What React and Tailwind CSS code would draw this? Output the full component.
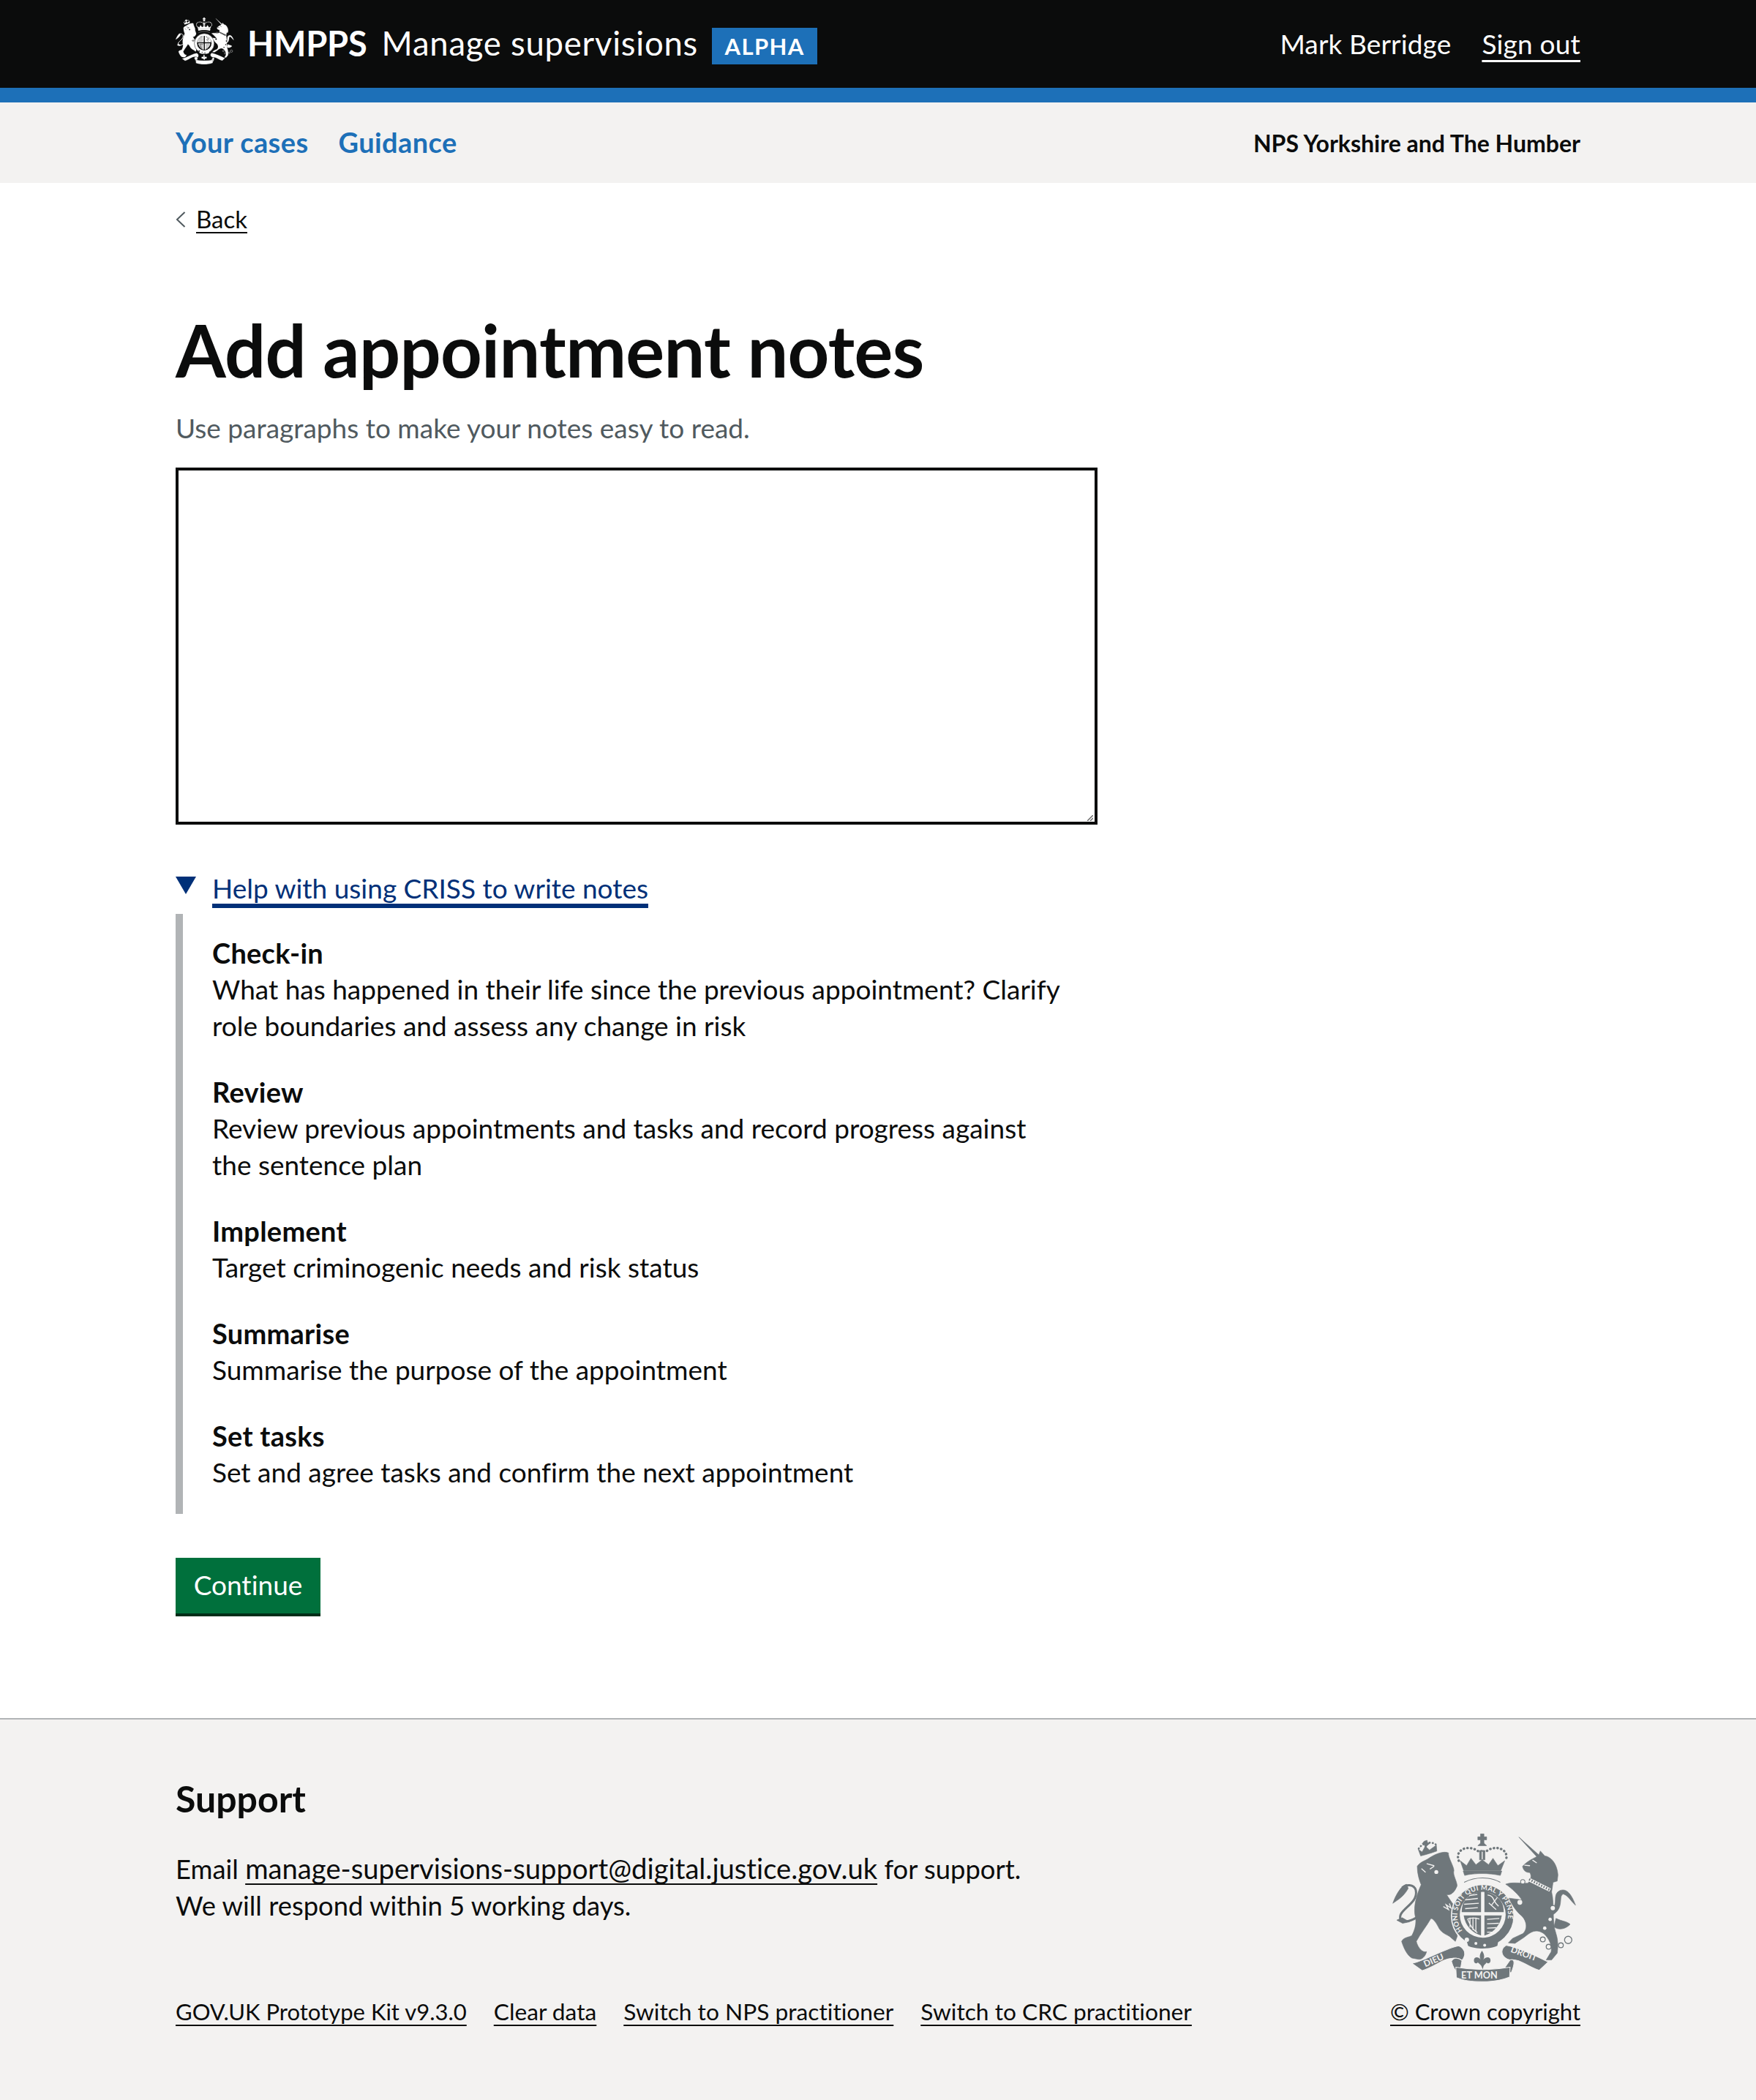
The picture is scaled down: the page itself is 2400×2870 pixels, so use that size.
import React from "react";

function Crest({ fg, bg, showText, id, className }) {
  return (
    <svg viewBox="70 75 755 620" className={className} aria-hidden="true">
      <g fill={fg} stroke={fg} strokeWidth="2" strokeLinejoin="round">
        {/* lion crown */}
        <path d="M186,172 L176,145 L192,156 L205,132 L222,148 L250,128 L252,152 C235,158 205,168 186,172 Z" />
        <path d="M200,112 L212,108 L214,118 L224,120 L212,130 L206,140 L200,124 L192,122 Z" />
        {/* lion */}
        <path d="M172,214 C185,195 210,190 222,180 C245,165 280,150 300,160 C296,175 322,215 322,232 C316,250 335,275 335,295 C325,320 310,335 292,330 C310,360 340,395 340,412 C328,430 325,470 336,500 L328,522 L306,503 C295,495 275,490 262,470 C252,450 240,430 228,428 C210,460 185,490 168,522 C175,550 195,570 210,564 C205,585 190,598 175,595 L150,590 C130,580 115,545 108,522 C115,505 140,505 150,498 C165,470 168,445 165,425 C155,390 165,340 188,290 C180,270 172,245 172,214 Z" />
        <path d="M168,425 C130,448 92,444 104,412 C118,382 176,360 166,312 C158,286 125,288 110,302" fill="none" strokeWidth="9" />
        <path d="M128,288 C105,295 85,330 72,366 C95,350 115,340 135,305 Z" />
        <path d="M110,425 L88,435 L112,448 L140,442 Z" />
      </g>
      {/* shield and garter */}
      <circle cx="440" cy="417" r="128" fill={fg} stroke={bg} strokeWidth="5" />
      <circle cx="440" cy="413" r="94" fill={bg} />
      <g fill={fg}>
        <path d="M354,402 C354,365 368,335 433,316 L433,402 Z" />
        <path d="M447,316 C512,335 526,365 526,402 L447,402 Z" />
        <path d="M362,416 L433,416 L433,498 C398,488 368,458 362,416 Z" />
        <path d="M447,416 L518,416 C512,458 482,488 447,498 Z" />
      </g>
      <g stroke={bg} strokeWidth="4" fill="none">
        <path d="M368,352 L420,346 M364,370 L424,366 M368,388 L420,384 M385,334 L418,330" />
        <path d="M460,332 C490,335 480,360 505,378 M465,365 L495,392 M500,342 L475,375" />
        <path d="M378,430 C388,455 398,475 418,486 M388,425 L388,465 M400,425 L400,476 M412,425 L412,484 M378,430 C395,425 410,425 426,430" />
        <path d="M458,432 L508,428 M458,450 L506,448 M458,468 L496,466 M458,484 L480,484" />
      </g>
      {showText ? (
        <g>
          <defs>
            <path id={id} d="M360,482 A104,104 0 1 1 520,482" />
          </defs>
          <text fill={bg} fontFamily="Lato, sans-serif" fontWeight="700" fontSize="28" letterSpacing="1">
            <textPath href={`#${id}`} startOffset="1%">HONI SOIT QUI MAL Y PENSE</textPath>
          </text>
        </g>
      ) : null}
      <path d="M372,512 C400,535 480,535 505,512 L500,540 C470,555 410,555 380,540 Z" fill={fg} />
      <circle cx="412" cy="530" r="6" fill={bg} />
      <circle cx="448" cy="538" r="6" fill={bg} />
      <circle cx="375" cy="515" r="9" fill={bg} />

      <g fill={fg} stroke={fg} strokeWidth="2" strokeLinejoin="round">
        {/* unicorn */}
        <path d="M603,215 C620,195 650,180 668,172 L676,152 L694,172 C720,175 745,205 748,250 L745,275 L728,280 L722,320 C735,370 722,440 740,490 C750,520 748,550 745,570 L722,598 L700,598 L720,565 C725,540 712,510 690,490 C660,470 640,480 610,505 L572,530 L545,528 L562,510 L605,490 C625,470 620,440 602,420 C585,405 565,385 548,345 L600,352 C590,335 560,305 534,288 C560,278 595,285 625,284 C640,265 640,250 632,240 C620,240 608,236 603,215 Z" />
        <path d="M588,95 L672,170 L664,178 Z" />
        <path d="M722,392 C752,370 722,330 756,314 C780,305 800,320 820,374 C795,350 790,335 770,328 C748,335 775,385 728,412 Z" />
        <path d="M740,428 C765,440 785,440 798,452 C780,472 750,478 732,462 Z" />
        {/* royal crown */}
        <path d="M431,82 L445,82 L445,94 L456,94 L456,106 L445,106 L445,120 L456,130 L420,130 L431,120 L431,106 L420,106 L420,94 L431,94 Z" />
        <path d="M427,150 L449,150 L449,188 L427,188 Z" />
        <path d="M362,232 L348,192 L374,212 L392,182 L412,208 L438,188 L464,208 L482,182 L502,212 L530,192 L514,232 Z" />
        <path d="M360,234 L518,234 L512,252 C470,242 400,242 366,252 Z" />
      </g>
      <path d="M364,272 C410,246 470,246 512,272" fill="none" stroke={bg} strokeWidth="12" />
      <path d="M364,280 C410,256 470,256 512,280" fill="none" stroke={fg} strokeWidth="3" />
      {/* crown pearls */}
      <path d="M342,192 C326,150 370,128 410,146 C425,156 436,158 437,148 C440,158 452,156 466,146 C505,128 550,150 534,192" fill="none" stroke={fg} strokeWidth="10" strokeDasharray="1 14" strokeLinecap="round" />
      <path d="M178,142 C198,112 240,112 252,130" fill="none" stroke={fg} strokeWidth="8" strokeDasharray="1 12" strokeLinecap="round" />
      {/* inner detail */}
      <g fill="none" stroke={bg} strokeWidth="4" strokeLinecap="round">
        <path d="M438,156 L438,184" />
        <path d="M212,204 L240,212 M190,225 L205,238 M225,225 L240,215" />
        <path d="M280,380 L300,392 L290,372 L310,385 L304,368" />
        <path d="M612,210 L632,212 M645,190 L660,200" />
      </g>
      <circle cx="250" cy="238" r="8" fill={bg} />
      {/* unicorn collar */}
      <path d="M628,268 L716,312" fill="none" stroke={bg} strokeWidth="15" />
      <path d="M630,268 L716,312" fill="none" stroke={fg} strokeWidth="9" strokeDasharray="5 6" />
      <circle cx="604" cy="278" r="9" fill={bg} stroke={fg} strokeWidth="3" />
      <circle cx="592" cy="362" r="10" fill={bg} />
      <circle cx="716" cy="432" r="7" fill={bg} />
      <circle cx="694" cy="468" r="7" fill={bg} />
      <g fill={bg} stroke={fg} strokeWidth="4">
        <circle cx="686" cy="514" r="10" />
        <circle cx="710" cy="544" r="10" />
        <circle cx="760" cy="538" r="10" />
        <circle cx="790" cy="516" r="15" />
        <circle cx="727" cy="386" r="11" />
      </g>
      {/* ribbon */}
      <g fill={fg} stroke={bg} strokeWidth="3">
        <path d="M150,612 C210,600 290,548 342,540 C368,552 374,578 355,600 C335,585 300,590 280,600 C250,615 225,632 192,642 Z" />
        <path d="M535,538 C590,548 650,578 708,606 L672,640 C630,630 590,590 552,598 C520,590 505,560 535,538 Z" />
        <path d="M355,600 C335,585 318,590 312,604 C318,625 325,640 338,650 L350,630 Z" />
        <path d="M552,598 C575,590 570,620 556,652 L530,630 Z" />
        <path d="M330,628 C400,640 480,640 552,628 L550,668 C490,693 385,693 332,670 Z" />
      </g>
      {showText ? (
        <g fill={bg} fontFamily="Lato, sans-serif" fontWeight="700" fontSize="36">
          <text transform="translate(205 628) rotate(-24)">DIEU</text>
          <text transform="translate(552 565) rotate(20)">DROIT</text>
          <text x="352" y="675" fontSize="38">ET MON</text>
        </g>
      ) : null}
      {/* fleur */}
      <path d="M437,560 C450,578 446,590 442,598 C450,585 472,582 472,600 C472,612 460,616 456,608 C452,614 446,618 444,622 L440,636 L434,622 C430,616 424,612 420,608 C414,616 404,612 404,600 C404,582 426,585 432,598 C428,590 424,578 437,560 Z" fill={fg} />
    </svg>
  );
}

const FONT = "font-['Lato','Liberation_Sans',sans-serif]";
const UL = "underline [text-decoration-skip-ink:none]";

function Block({ title, children }) {
  return (
    <div>
      <div className="font-bold text-[38px] tracking-[0.25px]">{title}</div>
      <p>{children}</p>
    </div>
  );
}

export default function App() {
  return (
    <div className={`${FONT} [font-variant-ligatures:none] bg-white text-[#0b0c0c] text-[37px] leading-[50px] w-[2400px] h-[2870px] flex flex-col`}>
      <header className="bg-[#0b0c0c] text-white h-[120px] shrink-0 border-0">
        <div className="w-[1920px] mx-auto h-full flex items-center justify-between">
          <div className="flex items-center">
            <Crest id="top" fg="#ffffff" bg="#0b0c0c" showText={false} className="w-[80px] h-[70px] mb-[8px]" />
            <span className="ml-[18px] text-[47px] font-bold leading-[50px] mb-[2px] tracking-[-0.2px]">HMPPS</span>
            <span className="ml-[20px] text-[45.5px] leading-[50px] mb-[2px] tracking-[0.75px]">Manage supervisions</span>
            <span className="ml-[19px] h-[50px] w-[144px] bg-[#1d70b8] text-[31px] font-bold flex items-center justify-center tracking-[1.4px] mt-[5px]">ALPHA</span>
          </div>
          <div className="flex items-center text-[37px] mb-[1px]">
            <span className="tracking-[0.14px]">Mark Berridge</span>
            <a className={`ml-[42px] tracking-[0.2px] ${UL} decoration-[3px] underline-offset-[8px]`}>Sign out</a>
          </div>
        </div>
      </header>
      <div className="bg-[#1d70b8] h-[20px] shrink-0" />
      <nav className="bg-[#f3f2f1] h-[110px] shrink-0">
        <div className="w-[1920px] mx-auto h-full flex items-center justify-between">
          <div className="flex gap-[41px] text-[#1d70b8] font-bold text-[38px] tracking-[0.4px] mb-[3px]">
            <a>Your cases</a>
            <a>Guidance</a>
          </div>
          <div className="font-bold text-[32px] mt-[1px]">NPS Yorkshire and The Humber</div>
        </div>
      </nav>
      <main className="w-[1920px] mx-auto flex-1">
        <div className="flex items-center h-[40px] mt-[30px]">
          <svg viewBox="0 0 14 22" className="w-[14px] h-[22px]" aria-hidden="true">
            <path d="M12.5 1 L2 11 L12.5 21" fill="none" stroke="#505a5f" strokeWidth="2" />
          </svg>
          <a className={`ml-[14px] mb-[2px] text-[33px] ${UL} decoration-[2px] underline-offset-[5px]`}>Back</a>
        </div>
        <h1 className="font-bold text-[99px] leading-[100px] mt-[108px] tracking-[-0.7px]">Add appointment notes</h1>
        <div className="text-[#505a5f] mt-[32px]">Use paragraphs to make your notes easy to read.</div>
        <div className="relative w-[1260px] mt-[29px]">
          <textarea className="block w-full h-[488px] border-[4px] border-[#0b0c0c] bg-white resize-none" />
          <svg viewBox="0 0 8 8" className="absolute right-[6px] bottom-[5px] w-[8px] h-[8px]" aria-hidden="true">
            <path d="M0 8 L8 0 M4 8 L8 4" fill="none" stroke="#6b6b6b" strokeWidth="1.5" />
          </svg>
        </div>
        <div className="mt-[62px] flex items-start">
          <svg viewBox="0 0 28 24" className="w-[28px] h-[24px] mt-[9px]" aria-hidden="true">
            <path d="M0 0 H28 L14 24 Z" fill="#003078" />
          </svg>
          <a className={`ml-[22px] text-[#003078] ${UL} decoration-[6px] underline-offset-[7px]`}>Help with using CRISS to write notes</a>
        </div>
        <div className="w-[1260px] mt-[10px] border-l-[10px] border-[#b1b4b6] pl-[40px] pt-[28px] pb-[32px] pr-[45px] flex flex-col gap-[40px]">
          <Block title="Check-in">What has happened in their life since the previous appointment? Clarify role boundaries and assess any change in risk</Block>
          <Block title="Review">Review previous appointments and tasks and record progress against the sentence plan</Block>
          <Block title="Implement">Target criminogenic needs and risk status</Block>
          <Block title="Summarise">Summarise the purpose of the appointment</Block>
          <Block title="Set tasks">Set and agree tasks and confirm the next appointment</Block>
        </div>
        <button className="mt-[60px] block w-[198px] h-[80px] bg-[#00703c] text-white shadow-[inset_0_-4px_0_#002d18] text-[37px] pb-[6px]">Continue</button>
      </main>
      <footer className="bg-[#f3f2f1] border-t-[2px] border-[#b1b4b6] h-[522px] shrink-0">
        <div className="w-[1920px] mx-auto">
          <h2 className="font-bold text-[50px] leading-[60px] mt-[78px]">Support</h2>
          <div className="flex justify-between items-start">
            <div>
              <p className="mt-[40px] text-[36.4px]">
                Email <a className={`text-[38.2px] ${UL} decoration-[2px] underline-offset-[6px]`}>manage-supervisions-support@digital.justice.gov.uk</a> for support.<br />We will respond within 5 working days.
              </p>
              <div className="flex gap-[37px] text-[31.7px] leading-[40px] mt-[100px]">
                <a className={`text-[31px] ${UL} decoration-[2px] underline-offset-[6px]`}>GOV.UK Prototype Kit v9.3.0</a>
                <a className={`${UL} decoration-[2px] underline-offset-[6px]`}>Clear data</a>
                <a className={`${UL} decoration-[2px] underline-offset-[6px]`}>Switch to NPS practitioner</a>
                <a className={`${UL} decoration-[2px] underline-offset-[6px]`}>Switch to CRC practitioner</a>
              </div>
            </div>
            <div className="flex flex-col items-end mt-[16px]">
              <Crest id="foot" fg="#6f777b" bg="#f3f2f1" showText={true} className="w-[252px] h-[207px] mr-[5px]" />
              <a className={`mt-[18px] text-[31px] leading-[40px] ${UL} decoration-[2px] underline-offset-[6px]`}>© Crown copyright</a>
            </div>
          </div>
        </div>
      </footer>
    </div>
  );
}
